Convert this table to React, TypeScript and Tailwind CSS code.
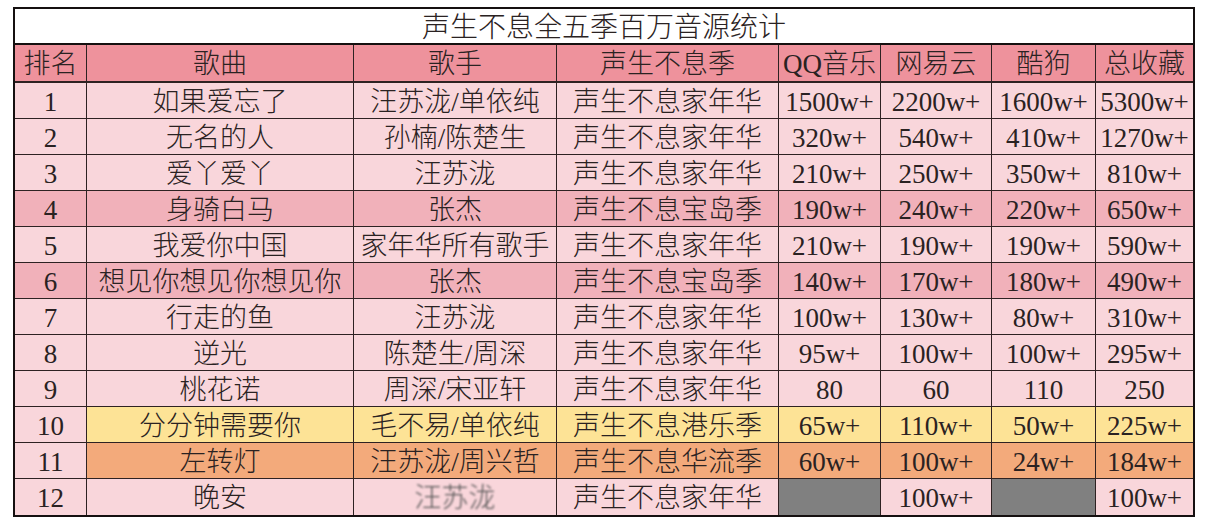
const COLS = ['排名', '歌曲', '歌手', '声生不息季', 'QQ音乐', '网易云', '酷狗', '总收藏'];

type Row = { cells: string[]; tone: 'light' | 'dark' | 'yellow' | 'orange'; gray?: number[]; blur?: number[] };

const ROWS: Row[] = [
  { cells: ['1', '如果爱忘了', '汪苏泷/单依纯', '声生不息家年华', '1500w+', '2200w+', '1600w+', '5300w+'], tone: 'light' },
  { cells: ['2', '无名的人', '孙楠/陈楚生', '声生不息家年华', '320w+', '540w+', '410w+', '1270w+'], tone: 'light' },
  { cells: ['3', '爱丫爱丫', '汪苏泷', '声生不息家年华', '210w+', '250w+', '350w+', '810w+'], tone: 'light' },
  { cells: ['4', '身骑白马', '张杰', '声生不息宝岛季', '190w+', '240w+', '220w+', '650w+'], tone: 'dark' },
  { cells: ['5', '我爱你中国', '家年华所有歌手', '声生不息家年华', '210w+', '190w+', '190w+', '590w+'], tone: 'light' },
  { cells: ['6', '想见你想见你想见你', '张杰', '声生不息宝岛季', '140w+', '170w+', '180w+', '490w+'], tone: 'dark' },
  { cells: ['7', '行走的鱼', '汪苏泷', '声生不息家年华', '100w+', '130w+', '80w+', '310w+'], tone: 'light' },
  { cells: ['8', '逆光', '陈楚生/周深', '声生不息家年华', '95w+', '100w+', '100w+', '295w+'], tone: 'light' },
  { cells: ['9', '桃花诺', '周深/宋亚轩', '声生不息家年华', '80', '60', '110', '250'], tone: 'light' },
  { cells: ['10', '分分钟需要你', '毛不易/单依纯', '声生不息港乐季', '65w+', '110w+', '50w+', '225w+'], tone: 'yellow' },
  { cells: ['11', '左转灯', '汪苏泷/周兴哲', '声生不息华流季', '60w+', '100w+', '24w+', '184w+'], tone: 'orange' },
  { cells: ['12', '晚安', '汪苏泷', '声生不息家年华', '', '100w+', '', '100w+'], tone: 'light', gray: [4, 6], blur: [2] },
];

const TONE = {
  light: 'bg-[#f9d6db]',
  dark: 'bg-[#f1b1ba]',
  yellow: 'bg-[#fde396]',
  orange: 'bg-[#f3aa7b]',
};

export default function App() {
  return (
    <div className="w-[1206px] h-[529px] bg-white pt-[7px] pl-[13px] font-['Liberation_Serif','Noto_Sans_CJK_SC',serif] font-light text-[#2a2222]">
      <div className="w-[1182px] border-2 border-[#151010]">
        <div className="h-[36px] pt-[3px] flex items-center justify-center text-[28px] bg-white border-b-2 border-[#151010]">
          声生不息全五季百万音源统计
        </div>
        <div className="grid grid-cols-[72px_267px_203px_222px_102px_111px_104px_97px] grid-rows-[38px_repeat(12,36px)]">
          {COLS.map((c, i) => (
            <div
              key={c}
              className={`flex items-center justify-center pt-[3px] text-[27px] bg-[#ee929c] border-b-2 border-[#2e2222] ${i < 7 ? 'border-r-[1.5px]' : ''}`}
            >
              {c}
            </div>
          ))}
          {ROWS.map((r, ri) =>
            r.cells.map((c, ci) => {
              const tone = ci === 0 && (r.tone === 'yellow' || r.tone === 'orange') ? TONE.light : TONE[r.tone];
              const gray = r.gray?.includes(ci);
              const blur = r.blur?.includes(ci);
              return (
                <div
                  key={ri + '-' + ci}
                  className={`flex items-center justify-center pt-[3px] text-[27px] whitespace-nowrap overflow-hidden border-[#2e2222] ${
                    gray ? 'bg-[#808080]' : tone
                  } ${ci < 7 ? 'border-r-[1.5px]' : ''} ${ri < ROWS.length - 1 ? 'border-b-[1.5px]' : ''}`}
                >
                  <span className={blur ? 'blur-[1.2px] text-[#555]' : ''}>{c}</span>
                </div>
              );
            })
          )}
        </div>
      </div>
    </div>
  );
}
